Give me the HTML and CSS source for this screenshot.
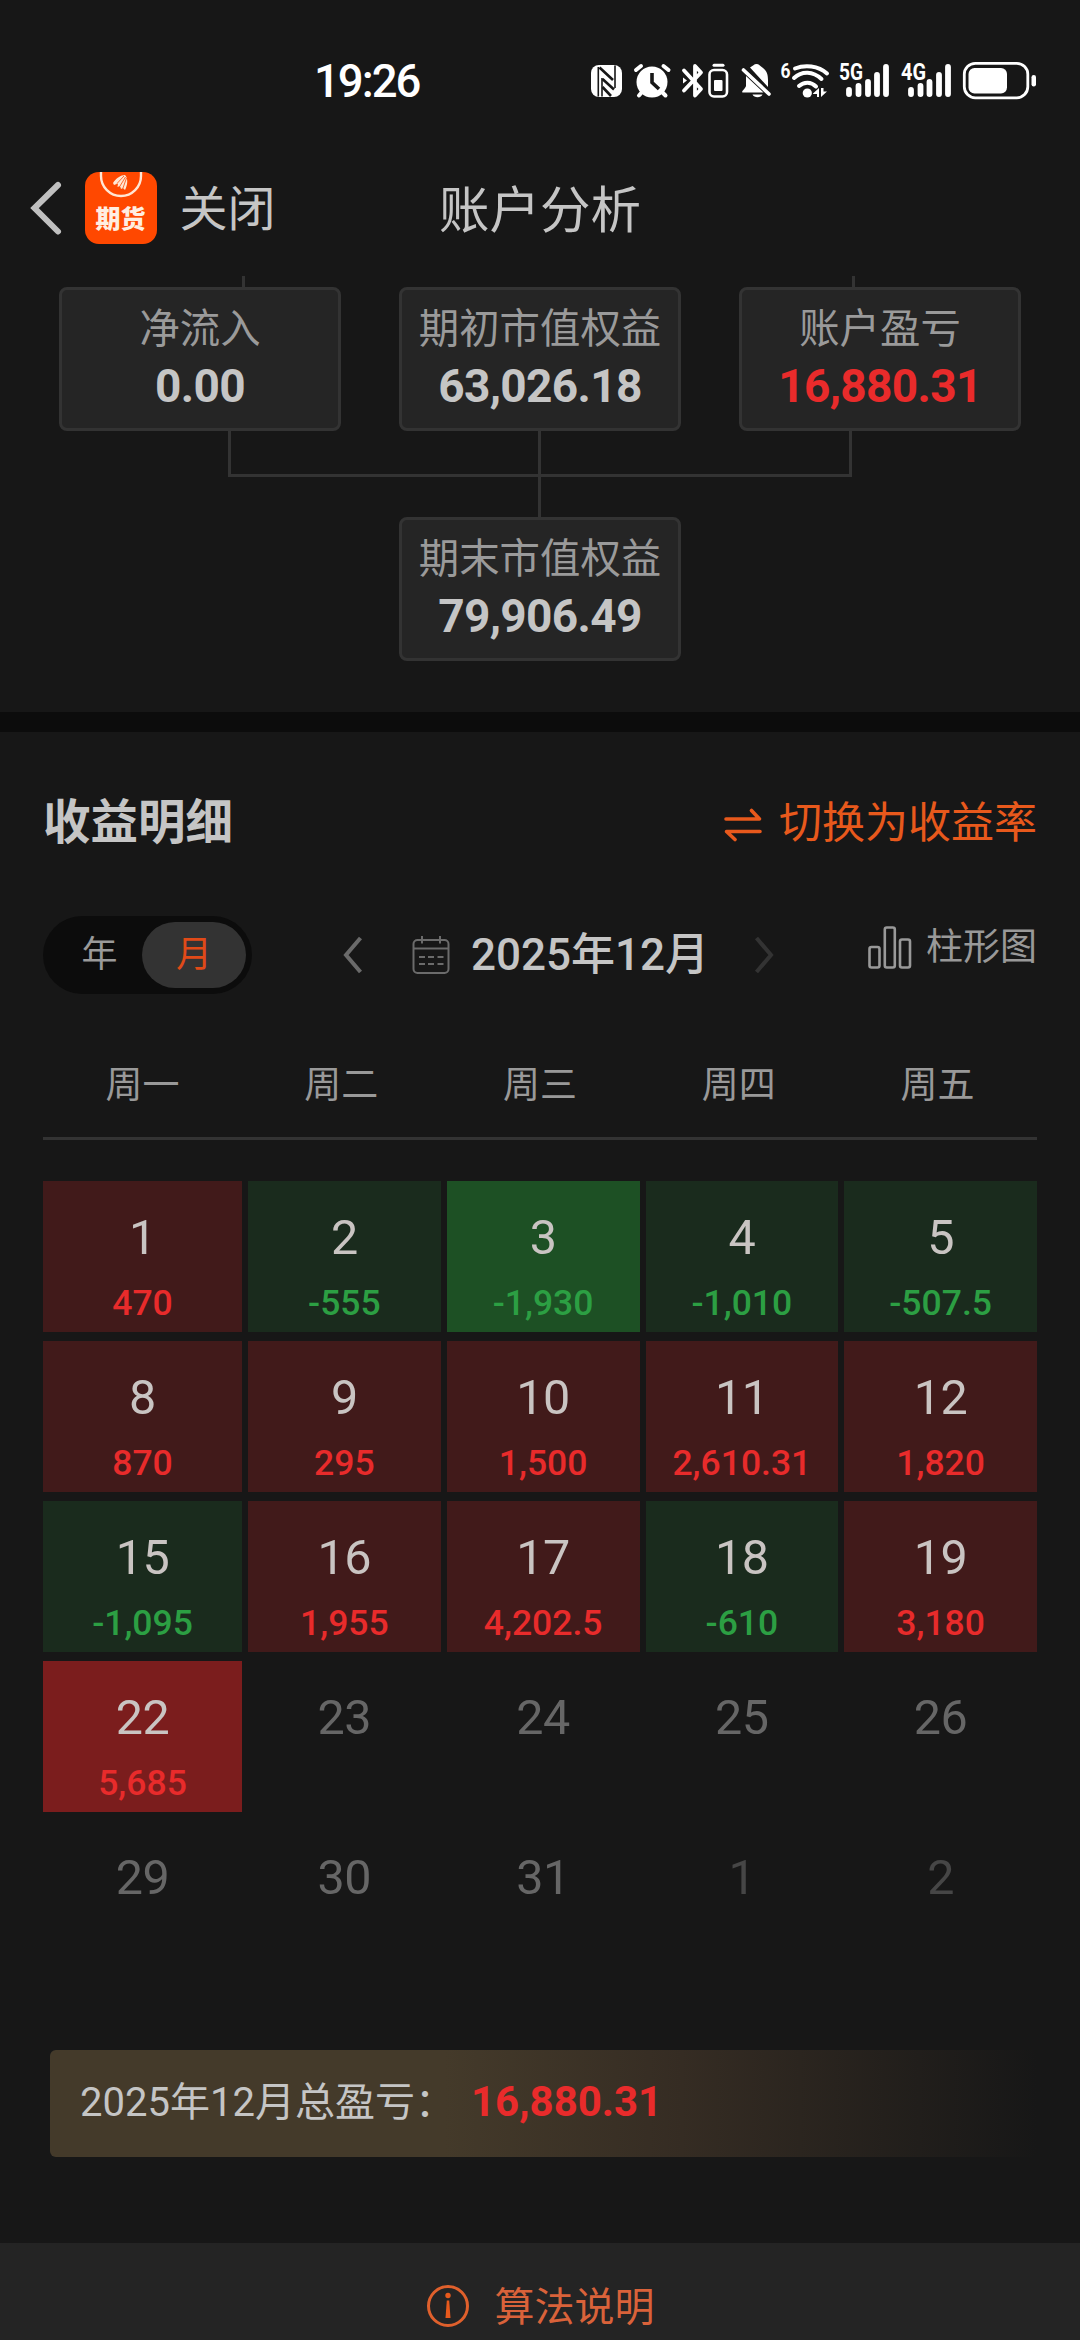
FILE: index.html
```html
<!DOCTYPE html>
<html lang="zh-CN">
<head>
<meta charset="utf-8">
<title>账户分析</title>
<link rel="stylesheet" href="styles.css">
</head>
<body>
<div class="screen">
  <div class="statusbar">
    <span class="clock">19:26</span>
    <svg class="status-icons" width="460" height="50" viewBox="0 0 460 50" fill="none" stroke-linecap="round">
      <!-- NFC -->
      <rect x="11" y="9" width="31" height="32" rx="8" fill="#fff"/>
      <path d="M18.300 11V40.500M35 9.500V32" stroke="#171717" stroke-width="1.600" stroke-linecap="butt"/>
      <path d="M19.500 11.500L33 24M22.500 23L34 33.500M22.500 31L31 40" stroke="#171717" stroke-width="2.600" stroke-linecap="butt"/>
      <path d="M22 22V40.500" stroke="#171717" stroke-width="1.600" stroke-linecap="butt"/>
      <!-- Alarm -->
      <circle cx="72" cy="26" r="15.500" fill="#fff"/>
      <path d="M56 14L61 10M88.500 14L83.500 10M62 36L59 39.500M82 36L85.500 39.500" stroke="#fff" stroke-width="4"/>
      <path d="M72 17V26.500L79 33" stroke="#171717" stroke-width="3.600" stroke-linecap="butt"/>
      <!-- Bluetooth and device battery -->
      <path d="M104 14.500L121 33L115 39.500V10L121 16.500L104 34.500" stroke="#fff" stroke-width="3.800" stroke-linejoin="round"/>
      <path d="M103 21.500L107 24.500L103 27.500Z" fill="#fff"/>
      <rect x="129.500" y="14" width="17.500" height="26.500" rx="4.500" stroke="#fff" stroke-width="2.600"/>
      <path d="M134 9.200H143" stroke="#fff" stroke-width="3"/>
      <rect x="134" y="24" width="8.500" height="11" rx="1" fill="#fff"/>
      <!-- Muted bell -->
      <path d="M170 11.500C173 10 174 8 176.500 8S180 10 183 12C187 15 188 19 188 24V31ZM166 20L183.500 36.500H162.500C161 35.500 165 33 166 30Z" fill="#fff"/>
      <path d="M163.500 14L189 38" stroke="#fff" stroke-width="3.600"/>
      <path d="M172.500 38.500H182.500C181 42 174 42 172.500 38.500Z" fill="#fff"/>
      <!-- Wi-Fi -->
      <path d="M215 12.500C225 8.500 238 9.500 247 17.500M214 22C222 14.500 233 15 241.500 23M219 30C224 25.500 231 25.500 236 30.500" stroke="#fff" stroke-width="4"/>
      <circle cx="227.300" cy="37" r="4.600" fill="#fff"/>
      <path d="M233 37.500L239 32V41H237V38H233ZM241 32V41L247 35.500H243.500V32Z" fill="#fff"/>
      <!-- Signal bars -->
      <path d="M269 34V38M278.500 30V38M288 26V38M297 19V38M306 11V38M331 34V38M340.500 30V38M349.500 26V38M359 19V38M368 11V38" stroke="#fff" stroke-width="5.800"/>
      <!-- Battery -->
      <rect x="384.300" y="7.300" width="63.500" height="34.500" rx="11" stroke="#fff" stroke-width="2.800"/>
      <rect x="388.500" y="12" width="38.500" height="25.500" rx="6" fill="#fff"/>
      <rect x="451.500" y="19" width="4.500" height="11.500" rx="2.200" fill="#fff"/>
      <g class="status-label" fill="#fff">
        <text x="200.500" y="22" font-size="21" textLength="10" lengthAdjust="spacingAndGlyphs">6</text>
        <text x="259" y="24" font-size="23" textLength="24" lengthAdjust="spacingAndGlyphs">5G</text>
        <text x="321" y="24" font-size="23" textLength="25" lengthAdjust="spacingAndGlyphs">4G</text>
      </g>
    </svg>
  </div>

  <header class="navbar">
    <div class="nav-left">
      <svg class="back" width="36" height="56" viewBox="0 0 36 56" fill="none" stroke="#c0c0c0" stroke-width="6" stroke-linecap="round"><path d="M30 5L6.500 28L30 51.500"/></svg>
      <div class="app-logo">
        <svg width="72" height="28" viewBox="0 0 72 28" fill="none">
          <path d="M16 0V4A20 20 0 0 0 56 4V0" stroke="#ffe6d4" stroke-width="2.400"/>
          <path d="M28 11C31 6 36 3 40 3C43 6 43 12 40 18L38 16L36 17L35 14L32.500 15L33 11.500L29 13Z" fill="#ffe6d4"/>
          <path d="M39 4L32 11.500M40.500 5L35 14M41.500 6L38 16" stroke="#ff4800" stroke-width=".8"/>
        </svg>
        <span class="logo-text">期货</span>
      </div>
      <span class="close">关闭</span>
    </div>
    <h1 class="nav-title">账户分析</h1>
  </header>

  <section class="flow">
    <svg class="links" width="1080" height="11" fill="#333"><path d="M242 0h3v11h-3zM852 0h3v11h-3z"/></svg>
    <div class="flow-row">
      <div class="node"><span class="node-label">净流入</span><span class="node-value">0.00</span></div>
      <div class="node"><span class="node-label">期初市值权益</span><span class="node-value">63,026.18</span></div>
      <div class="node"><span class="node-label">账户盈亏</span><span class="node-value profit">16,880.31</span></div>
    </div>
    <svg class="links" width="1080" height="86" fill="#333"><path d="M228 0h3v43h618V0h3v46H228zM538 0h3v86h-3z"/></svg>
    <div class="flow-row">
      <div class="node"><span class="node-label">期末市值权益</span><span class="node-value">79,906.49</span></div>
    </div>
  </section>

  <section class="detail">
    <div class="detail-head">
      <h2 class="detail-title">收益明细</h2>
      <div class="switch">
        <svg width="38" height="34" viewBox="0 0 38 34" fill="none" stroke="#e8591c" stroke-width="3.600" stroke-linecap="round" stroke-linejoin="round"><path d="M2 11H35.500L27.500 2.500M36 23.500H2.500L11 31.500"/></svg>
        <span>切换为收益率</span>
      </div>
    </div>

    <div class="controls">
      <div class="toggle"><span class="seg">年</span><span class="seg active">月</span></div>
      <div class="month">
        <svg class="prev" width="20" height="38" viewBox="0 0 20 38" fill="none" stroke="#6a6a6a" stroke-width="4"><path d="M17.500 2L3 19L17.500 36"/></svg>
        <svg class="calendar-icon" width="38" height="38" viewBox="0 0 38 38" fill="none" stroke="#6b6b6b" stroke-width="2">
          <rect x="1.500" y="4" width="35" height="33" rx="4"/>
          <path d="M1.500 12.500H36.500M10 0V7.500M28 0V7.500M7 21H13M16 21H22M25.500 21H31.500M7 28H13M16 28H22M25.500 28H31.500"/>
        </svg>
        <span class="month-name">2025年12月</span>
        <svg class="next" width="20" height="38" viewBox="0 0 20 38" fill="none" stroke="#333" stroke-width="4"><path d="M2.500 2L17 19L2.500 36"/></svg>
      </div>
      <div class="chart-link">
        <svg width="44" height="44" viewBox="0 0 44 44" fill="none" stroke="#999" stroke-width="2.600">
          <rect x="1.500" y="21" width="10" height="20.500" rx="2"/><rect x="16.800" y="1.500" width="10" height="40" rx="2"/><rect x="32" y="13.500" width="10" height="28" rx="2"/>
        </svg>
        <span>柱形图</span>
      </div>
    </div>

    <div class="weekdays"><span>周一</span><span>周二</span><span>周三</span><span>周四</span><span>周五</span></div>

    <div class="calendar">
      <div class="day up"><b>1</b><i>470</i></div>
      <div class="day down"><b>2</b><i>-555</i></div>
      <div class="day down strong"><b>3</b><i>-1,930</i></div>
      <div class="day down"><b>4</b><i>-1,010</i></div>
      <div class="day down"><b>5</b><i>-507.5</i></div>
      <div class="day up"><b>8</b><i>870</i></div>
      <div class="day up"><b>9</b><i>295</i></div>
      <div class="day up"><b>10</b><i>1,500</i></div>
      <div class="day up"><b>11</b><i>2,610.31</i></div>
      <div class="day up"><b>12</b><i>1,820</i></div>
      <div class="day down"><b>15</b><i>-1,095</i></div>
      <div class="day up"><b>16</b><i>1,955</i></div>
      <div class="day up"><b>17</b><i>4,202.5</i></div>
      <div class="day down"><b>18</b><i>-610</i></div>
      <div class="day up"><b>19</b><i>3,180</i></div>
      <div class="day up strong"><b>22</b><i>5,685</i></div>
      <div class="day"><b>23</b></div>
      <div class="day"><b>24</b></div>
      <div class="day"><b>25</b></div>
      <div class="day"><b>26</b></div>
      <div class="day"><b>29</b></div>
      <div class="day"><b>30</b></div>
      <div class="day"><b>31</b></div>
      <div class="day outside"><b>1</b></div>
      <div class="day outside"><b>2</b></div>
    </div>

    <div class="summary"><span class="summary-label">2025年12月总盈亏：</span><span class="summary-value">16,880.31</span></div>
  </section>

  <footer class="footer">
    <svg width="44" height="44" viewBox="0 0 44 44" fill="none">
      <circle cx="22" cy="22" r="19.500" stroke="#e0602c" stroke-width="3"/>
      <circle cx="22" cy="11.500" r="2.700" fill="#e8591c"/>
      <path d="M20.800 16.500H23.200L24.500 34H19.500Z" fill="#e8591c"/>
    </svg>
    <span class="footer-text">算法说明</span>
  </footer>
</div>
</body>
</html>
```
FILE: styles.css
```css
* { box-sizing: border-box; }
body {
  margin: 0;
  background: #171717;
  color: #c5c5c5;
  font-family: Roboto, "Noto Sans CJK SC", sans-serif;
}
svg { display: block; flex: none; }
h1, h2 { margin: 0; }
.screen {
  width: 1080px;
  height: 2340px;
  overflow: hidden;
  display: flex;
  flex-direction: column;
}

.statusbar {
  height: 160px;
  flex: none;
  display: flex;
  align-items: center;
  justify-content: space-between;
  padding: 2px 40px 0 314px;
}
.clock { color: #fff; font-size: 45.500px; font-weight: 500; line-height: 60px; letter-spacing: -2px; padding-top: 2px; }
.status-label { font-family: Roboto, sans-serif; font-weight: 700; }

.navbar {
  height: 116px;
  flex: none;
  display: grid;
  grid-template-columns: 1fr auto 1fr;
  align-items: start;
  padding: 12px 28px 0;
}
.nav-left { display: flex; align-items: center; height: 72px; }
.app-logo {
  width: 72px;
  height: 72px;
  margin-left: 20.500px;
  border-radius: 14px;
  background: #ff4800;
  overflow: hidden;
  display: flex;
  flex-direction: column;
  align-items: center;
}
.logo-text { font-size: 25px; line-height: 36px; font-weight: 900; color: #ffeee2; margin-top: 2px; }
.close { font-size: 48px; line-height: 72px; margin-left: 23px; padding-top: 4px; }
.nav-title { font-size: 50.500px; line-height: 72px; font-weight: 400; padding-top: 3px; }

.flow { flex: none; height: 436px; }
.flow-row { display: flex; justify-content: center; gap: 58px; }
.node {
  width: 282px;
  height: 144px;
  border: 3px solid #333;
  border-radius: 8px;
  background: #252525;
  display: flex;
  flex-direction: column;
  align-items: center;
  padding-top: 10px;
}
.node-label { font-size: 40.400px; line-height: 60px; color: #9a9a9a; }
.node-value { font-size: 46px; line-height: 52px; font-weight: 700; letter-spacing: -0.65px; }
.profit { color: #e92b2b; }

.detail { flex: none; height: 1531px; border-top: 20px solid #0c0c0c; padding: 0 43px; }
.detail-head { display: flex; justify-content: space-between; align-items: center; height: 80px; margin-top: 51px; }
.detail-title { font-size: 47.500px; font-weight: 700; line-height: 80px; }
.switch { display: flex; align-items: center; gap: 17px; color: #e8591c; font-size: 43px; line-height: 80px; }
.switch svg { margin-top: 3px; }

.controls { display: flex; align-items: center; height: 78px; margin-top: 53px; }
.toggle { width: 209px; height: 78px; border-radius: 39px; background: #0c0c0c; padding: 6px; display: flex; }
.seg { flex: 1; text-align: center; font-size: 36px; line-height: 66px; color: #9a9a9a; padding-left: 8px; }
.seg.active { flex: none; width: 104px; height: 66px; padding: 0; border-radius: 33px; background: #333; color: #e04a18; }
.month { display: flex; align-items: center; margin-left: 91px; }
.calendar-icon { margin-left: 49px; }
.month-name { font-size: 44px; font-weight: 500; line-height: 76px; margin-left: 21px; width: 235px; white-space: nowrap; }
.next { margin-left: 48px; }
.chart-link { display: flex; align-items: center; margin-left: auto; gap: 14px; font-size: 37px; line-height: 66px; color: #999; padding-bottom: 14px; }

.weekdays {
  display: grid;
  grid-template-columns: repeat(5, 1fr);
  margin-top: 59px;
  height: 87px;
  border-bottom: 3px solid #333;
  text-align: center;
  font-size: 37px;
  line-height: 66px;
  color: #999;
}

.calendar {
  display: grid;
  grid-template-columns: 199px repeat(4, 1fr);
  grid-auto-rows: 151px;
  gap: 9px 6px;
  margin-top: 41px;
}
.day { display: flex; flex-direction: column; align-items: center; padding-top: 27px; color: #666; }
.day b { font-size: 48.500px; line-height: 60px; font-weight: 400; letter-spacing: -0.5px; }
.day i { font-size: 35.500px; line-height: 48px; font-style: normal; font-weight: 500; margin-top: 11px; }
.day.up { background: #411a1a; }
.day.up.strong { background: #7b1d1d; }
.day.down { background: #1a2b1d; }
.day.down.strong { background: #1d5024; }
.day.up b, .day.down b { color: #c9c4c2; }
.day.up i { color: #e82b2b; }
.day.down i { color: #2c9f43; }
.day.outside { color: #464646; }

.summary {
  margin: 78px 0 0 7px;
  height: 107px;
  border-radius: 6px;
  background: linear-gradient(90deg, #443a2a 0%, #443a2a 40%, #352c23 64%, #171717 100%);
  display: flex;
  align-items: center;
  padding: 0 0 4px 30px;
}
.summary-label { font-size: 40px; width: 391px; white-space: nowrap; padding-bottom: 5px; }
.summary-value { font-size: 42px; font-weight: 700; color: #e92b2b; }

.footer {
  flex: 1;
  background: #242424;
  display: flex;
  justify-content: center;
  align-items: center;
  gap: 25px;
  padding-top: 29px;
  font-size: 40px;
  color: #d9623a;
}
.footer-text { padding-bottom: 4px; }
```
